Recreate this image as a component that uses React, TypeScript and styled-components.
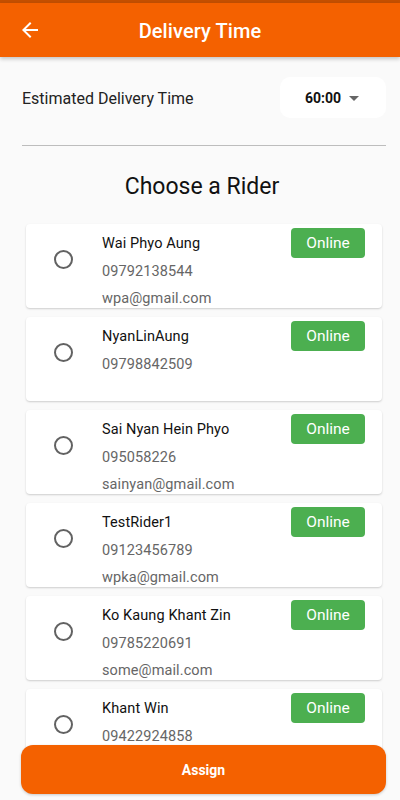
import React from 'react';
import styled, { createGlobalStyle } from 'styled-components';

const GlobalStyle = createGlobalStyle`
  html, body {
    margin: 0;
    padding: 0;
    background: #fafafa;
    font-family: Roboto, 'Noto Sans', 'Liberation Sans', sans-serif;
  }
  * { box-sizing: border-box; }
`;

const ORANGE = '#f46100';

const Screen = styled.div`
  position: relative;
  width: 400px;
  height: 800px;
  overflow: hidden;
  background: #fafafa;
  display: flex;
  flex-direction: column;
`;

const StatusStrip = styled.div`
  height: 3px;
  background: #c44f00;
`;

const AppBar = styled.header`
  height: 54px;
  background: ${ORANGE};
  display: grid;
  grid-template-columns: 60px 1fr 60px;
  align-items: center;
  box-shadow: 0 2px 4px rgba(0, 0, 0, 0.22);
  position: relative;
  z-index: 1;
`;

const BackButton = styled.button`
  border: none;
  background: transparent;
  padding: 0;
  margin-left: 18px;
  width: 24px;
  height: 24px;
  display: flex;
  color: #fff;
`;

const Title = styled.h1`
  margin: 2px 0 0;
  text-align: center;
  color: #fff;
  font-size: 20px;
  font-weight: 500;
  letter-spacing: 0.1px;
`;

const Content = styled.main`
  padding: 20px 14px 0 22px;
  display: flex;
  flex-direction: column;
`;

const EstimateRow = styled.div`
  display: flex;
  align-items: center;
  justify-content: space-between;
`;

const EstimateLabel = styled.span`
  font-size: 16px;
  color: #222;
  margin-top: 2px;
`;

const TimeSelect = styled.div`
  width: 106px;
  height: 41px;
  background: #fff;
  border-radius: 10px;
  display: flex;
  align-items: center;
  padding-left: 25px;
  gap: 1px;
  font-size: 14px;
  font-weight: 700;
  color: #111;
`;

const Divider = styled.hr`
  border: none;
  border-top: 1px solid #bdbdbd;
  margin: 27px 0 0;
`;

const SectionTitle = styled.h2`
  margin: 27px 0 0;
  text-align: center;
  font-size: 23px;
  font-weight: 400;
  color: #111;
  padding-right: 4px;
`;

const RiderList = styled.div`
  margin: 24px 4px 0 4px;
  display: flex;
  flex-direction: column;
  gap: 9px;
`;

const Card = styled.div`
  height: 84px;
  background: #fff;
  border-radius: 4px;
  box-shadow: 0 1px 2px rgba(0, 0, 0, 0.18);
  display: grid;
  grid-template-columns: 76px 1fr auto;
  align-items: start;
`;

const Radio = styled.span`
  width: 19px;
  height: 19px;
  border-radius: 50%;
  border: 2px solid #626262;
  margin: 26px 0 0 28px;
`;

const Info = styled.div`
  padding-top: 6px;
  display: flex;
  flex-direction: column;
`;

const Line = styled.span<{ $muted?: boolean }>`
  height: 27.5px;
  line-height: 27.5px;
  font-size: 14.5px;
  color: ${(p) => (p.$muted ? '#666' : '#111')};
  letter-spacing: 0.1px;
`;

const Badge = styled.span`
  margin: 4px 17px 0 0;
  width: 74px;
  height: 30px;
  border-radius: 4px;
  background: #4caf50;
  color: #fff;
  font-size: 15.5px;
  display: flex;
  align-items: center;
  justify-content: center;
`;

const AssignButton = styled.button`
  position: absolute;
  left: 21px;
  right: 14px;
  bottom: 6px;
  height: 49px;
  border: none;
  border-radius: 12px;
  background: ${ORANGE};
  color: #fff;
  font-family: inherit;
  font-size: 14px;
  font-weight: 700;
  box-shadow: 0 1px 3px rgba(0, 0, 0, 0.2);
`;

const riders = [
  { name: 'Wai Phyo Aung', phone: '09792138544', email: 'wpa@gmail.com' },
  { name: 'NyanLinAung', phone: '09798842509', email: '' },
  { name: 'Sai Nyan Hein Phyo', phone: '095058226', email: 'sainyan@gmail.com' },
  { name: 'TestRider1', phone: '09123456789', email: 'wpka@gmail.com' },
  { name: 'Ko Kaung Khant Zin', phone: '09785220691', email: 'some@mail.com' },
  { name: 'Khant Win', phone: '09422924858', email: '' },
];

export default function App() {
  return (
    <Screen>
      <GlobalStyle />
      <StatusStrip />
      <AppBar>
        <BackButton aria-label='Back'>
          <svg width='24' height='24' viewBox='0 0 24 24' fill='currentColor'>
            <path d='M20 11H7.83l5.59-5.59L12 4l-8 8 8 8 1.41-1.41L7.83 13H20v-2z' />
          </svg>
        </BackButton>
        <Title>Delivery Time</Title>
        <span />
      </AppBar>
      <Content>
        <EstimateRow>
          <EstimateLabel>Estimated Delivery Time</EstimateLabel>
          <TimeSelect>
            60:00
            <svg width='24' height='24' viewBox='0 0 24 24' fill='#666'>
              <path d='M7 10l5 5 5-5z' />
            </svg>
          </TimeSelect>
        </EstimateRow>
        <Divider />
        <SectionTitle>Choose a Rider</SectionTitle>
        <RiderList>
          {riders.map((r) => (
            <Card key={r.name}>
              <Radio />
              <Info>
                <Line>{r.name}</Line>
                <Line $muted>{r.phone}</Line>
                <Line $muted>{r.email}</Line>
              </Info>
              <Badge>Online</Badge>
            </Card>
          ))}
        </RiderList>
      </Content>
      <AssignButton>Assign</AssignButton>
    </Screen>
  );
}
